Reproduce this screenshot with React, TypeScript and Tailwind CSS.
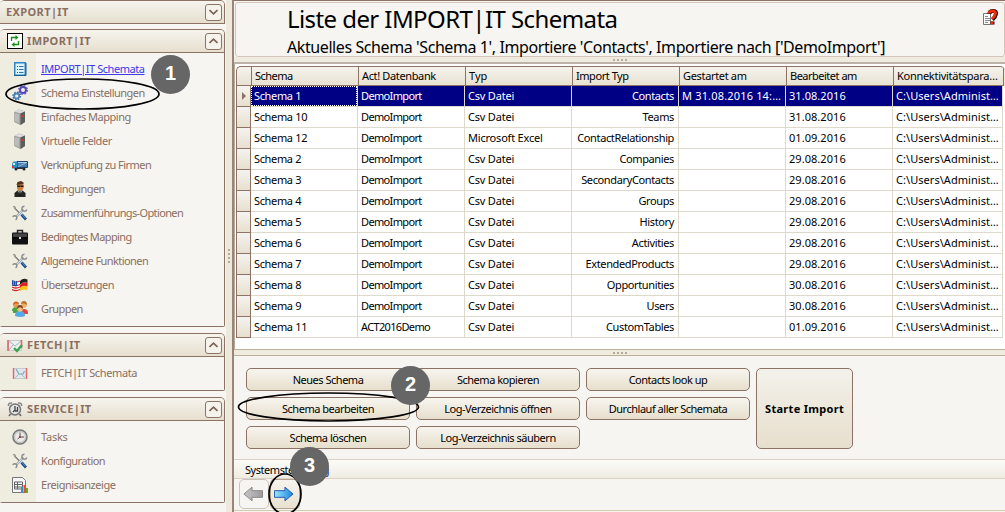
import type { ReactNode } from 'react'

// Small 16x16 drawings used in the navigation
const ICONS: Record<string, ReactNode> = {
  list: (
    <>
      <rect x="2" y="1" width="12" height="14" fill="#2c86c4" />
      <rect x="3.5" y="2.500" width="9" height="11" fill="#dff2ff" />
      <path d="M2 14.500h12V2" stroke="#155e96" fill="none" />
      <path d="M5 5.500h1M5 8.500h1M5 11.500h1" stroke="#155e96" />
      <path d="M7 5.500h4.500M7 8.500h4.500M7 11.500h4.500" stroke="#3277aa" />
    </>
  ),
  gears: (
    <>
      <circle cx="11" cy="5" r="3" fill="none" stroke="#5549b8" strokeWidth="2" />
      <circle cx="11" cy="5" r="4.2" fill="none" stroke="#6256c4" strokeWidth="1.6" strokeDasharray="1.7 1.6" />
      <circle cx="4.7" cy="11" r="2.5" fill="none" stroke="#4c86bb" strokeWidth="1.8" />
      <circle cx="4.7" cy="11" r="3.7" fill="none" stroke="#3972a8" strokeWidth="1.5" strokeDasharray="1.5 1.4" />
    </>
  ),
  server: (
    <>
      <path d="M2.500 3L7 .5l6 2v10.500l-4.500 3-6-3z" fill="#8a8a8a" />
      <path d="M2.500 3L7 .5l6 2-4.500 2z" fill="#dcdcdc" />
      <path d="M2.500 3l6 1.500V16l-6-3z" fill="#a5a5a5" />
      <path d="M4 4.500v8M6 5v8.500" stroke="#d0d0d0" />
      <path d="M8.500 4.500l4.500-2V13l-4.500 3z" fill="#5c5c5c" />
      <rect x="10" y="6.500" width="1.500" height="1.500" fill="#f33" />
    </>
  ),
  truck: (
    <>
      <path d="M5 4.500h10.500v6H5z" fill="#477eae" stroke="#203f63" />
      <path d="M6 5.500h9" stroke="#a9cdec" />
      <path d="M6 9.500L14 6" stroke="#8fb7da" />
      <path d="M0 6.500l1.500-2H5v7H0z" fill="#2592ca" />
      <path d="M1 6h2v2H1z" fill="#dff5ff" />
      <path d="M0 9h2v2H0z" fill="#e72f2f" />
      <circle cx="4" cy="12" r="1.500" fill="#222" />
      <circle cx="12" cy="12" r="1.500" fill="#222" />
      <path d="M4 11.500h8" stroke="#333" />
    </>
  ),
  agent: (
    <>
      <path d="M2.500 16v-4l3-2.500h5l3 2.500v4z" fill="#252525" />
      <path d="M6 9.500h4l-2 5z" fill="#eee" />
      <path d="M7.500 10h1l.5 4-1 1-1-1z" fill="#111" />
      <path d="M5 3h6.500v4l-1.500 3H6.500L5 7.500z" fill="#c98241" />
      <path d="M4.500 4l1-3L9 0l2.500 1.500V3z" fill="#54321d" />
      <path d="M5 4.500h6.500v1.500H9L8.500 5 8 6H5.500z" fill="#111" />
    </>
  ),
  tools: (
    <>
      <path d="M2.500 3l6 6" stroke="#777" strokeWidth="1.300" />
      <path d="M1 1.500l2 .5.500 1.500" stroke="#999" strokeWidth="1.400" fill="none" />
      <path d="M4 12l7.500-7.500" stroke="#8a8f94" strokeWidth="2.300" />
      <path d="M4 12l7.500-7.500" stroke="#d6d9dc" strokeWidth="1.100" />
      <path d="M12.500 1.200a2.500 2.500 0 1 0 2.300 3.300" stroke="#8a8f94" strokeWidth="1.500" fill="none" />
      <path d="M.8 12a2.100 2.100 0 1 1 2.700 2.800" stroke="#8a8f94" strokeWidth="1.500" fill="none" />
      <path d="M9.500 9.500l4.500 5" stroke="#1c4f88" strokeWidth="2.800" />
      <path d="M9.800 9.300l3.700 4" stroke="#6aa3d2" strokeWidth=".8" />
    </>
  ),
  briefcase: (
    <>
      <path d="M5.500 4V1.500h5V4" fill="none" stroke="#222" strokeWidth="1.400" />
      <rect x="0" y="3.500" width="16" height="12" rx="1" fill="#111" />
      <path d="M1 4.500h14v3.500H1z" fill="#444" />
      <path d="M0 9h16" stroke="#000" />
      <rect x="7" y="8" width="2" height="2" fill="#ddd" />
    </>
  ),
  flags: (
    <>
      <path d="M0 3q4 2 8 0v10q-4 2-8 0z" fill="#fff" />
      <path d="M0 4q4 2 8 0M0 7.500q4 2 8 0M0 10q4 2 8 0M0 12.500q4 2 8 0" stroke="#d92626" strokeWidth="1.300" fill="none" />
      <path d="M0 3q3 1.500 5 .8V9q-3 .5-5-.5z" fill="#254ea0" />
      <path d="M1 5h3M1 7h3" stroke="#fff" strokeDasharray="1 1" strokeWidth=".7" />
      <path d="M8 4q3-3.500 7.500-1.500V6Q11 4 8 8z" fill="#222" />
      <path d="M8 8q3-4 7.500-2v3.500Q11 8 8 11z" fill="#df2020" />
      <path d="M8 11q3-3.500 7.500-1.500V13Q11 11.500 8 14z" fill="#f8c316" />
    </>
  ),
  people: (
    <>
      <path d="M0 10q0-4 4-4t4 4z" fill="#46a83e" />
      <path d="M8 12q0-4 4-4t4 4v1H8z" fill="#e5443c" />
      <path d="M1 10h6v2H1z" fill="#46a83e" />
      <circle cx="4" cy="4" r="2.800" fill="#e99b55" />
      <path d="M1 4q0-3.500 3-3.500T7 3L4 2.500z" fill="#d16624" />
      <circle cx="12" cy="4" r="2.800" fill="#e9b06a" />
      <path d="M9 3q0-3 3-3t3 4L12 2.500z" fill="#b8752f" />
      <path d="M3 15q0-5 5-5t5 5q-4 2-10 0z" fill="#55a8e5" />
      <circle cx="8" cy="8" r="2.800" fill="#f3bd82" />
      <path d="M5 8q0-4 3-4t3 4L8 6z" fill="#7d4323" />
    </>
  ),
  mail: (
    <>
      <path d="M1.500 3.500h13v10h-13z" fill="#dfe7ea" stroke="#c3ccd0" />
      <path d="M1.500 3v11M14.500 3v11" stroke="#e8616b" strokeWidth="1.400" />
      <path d="M3 13l4-4M13 13L9 9" stroke="#a9bfc8" fill="none" />
      <path d="M4 4l3 5h4l1.500-3" stroke="#7fa9ba" strokeWidth="1.200" fill="none" />
    </>
  ),
  mailCheck: (
    <>
      <path d="M1.500 3.500h13v10h-13z" fill="#edf0f0" stroke="#c9c9c9" />
      <path d="M1 3v11M14.500 3v8" stroke="#e8616b" strokeWidth="1.600" />
      <path d="M2 4l6 5 6-5M2 13l4-5" stroke="#a5b1b5" fill="none" />
      <path d="M7 11l3 3 5-6" stroke="#3ca554" strokeWidth="2.400" fill="none" />
    </>
  ),
  alarm: (
    <>
      <circle cx="8" cy="8.500" r="5.500" fill="#e4e4e4" stroke="#777" strokeWidth="1.500" />
      <path d="M1.500 5Q1 1.500 5 2M14.500 5q.5-3.500-3.500-3" stroke="#888" strokeWidth="1.600" fill="none" />
      <path d="M8 5v4L6 11M10.500 6v4H8" stroke="#444" strokeWidth="1.300" fill="none" />
      <path d="M3.500 13l-1.500 2M12.500 13l1.500 2" stroke="#666" strokeWidth="1.500" />
    </>
  ),
  clock: (
    <>
      <circle cx="8" cy="8" r="7" fill="#deddda" stroke="#777" strokeWidth="1.500" />
      <circle cx="8" cy="8" r="5.500" fill="#e9e9e7" stroke="#bbb" />
      <path d="M8 3.500V8h4M8 8L5.500 10" stroke="#555" fill="none" />
      <circle cx="8" cy="8" r="1" fill="#a33" />
    </>
  ),
  report: (
    <>
      <path d="M.5.5h10l3 3v12H.5z" fill="#f6f6f6" stroke="#777" />
      <path d="M2.500 5h8v7h-8zM2.500 7.500h8M2.500 10h8M5.500 5v7" stroke="#666" fill="none" />
      <path d="M9 10h2v6H9z" fill="#2f93d3" />
      <path d="M11.500 8h2v8h-2z" fill="#ed4a25" />
      <path d="M14 11h2v5h-2z" fill="#5ab32f" />
    </>
  ),
  refresh: (
    <>
      <rect x=".5" y=".5" width="15" height="15" fill="#fff" stroke="#000" />
      <path d="M4.500 8V4.500H9M11.500 8v3.500H7" stroke="#159015" strokeWidth="1.300" fill="none" />
      <path d="M8.500 2l3 2.500-3 2.500zM7.500 9l-3 2.500 3 2.500z" fill="#159015" />
    </>
  ),
}

// icon, label, letter spacing
const IMPORT_ITEMS = [
  ['list', 'IMPORT|IT Schemata', 'tracking-[-0.45px]'],
  ['gears', 'Schema Einstellungen', 'tracking-[-0.5px]'],
  ['server', 'Einfaches Mapping', 'tracking-[-0.5px]'],
  ['server', 'Virtuelle Felder', 'tracking-[-0.45px]'],
  ['truck', 'Verknüpfung zu Firmen', 'tracking-[-0.54px]'],
  ['agent', 'Bedingungen', 'tracking-[-0.55px]'],
  ['tools', 'Zusammenführungs-Optionen', 'tracking-[-0.63px]'],
  ['briefcase', 'Bedingtes Mapping', 'tracking-[-0.6px]'],
  ['tools', 'Allgemeine Funktionen', 'tracking-[-0.58px]'],
  ['flags', 'Übersetzungen', 'tracking-[-0.5px]'],
  ['people', 'Gruppen', 'tracking-[-0.6px]'],
]

const FETCH_ITEMS = [['mail', 'FETCH|IT Schemata', 'tracking-[-0.38px]']]

const SERVICE_ITEMS = [
  ['clock', 'Tasks', 'tracking-[-0.25px]'],
  ['tools', 'Konfiguration', 'tracking-[-0.55px]'],
  ['report', 'Ereignisanzeige', 'tracking-[-0.45px]'],
]

const COLUMNS = [
  { name: 'Schema', head: 'tracking-[-0.5px]', cell: 'tracking-[-0.35px]' },
  { name: 'Act! Datenbank', head: 'tracking-[-0.36px]', cell: 'tracking-[-0.65px]' },
  { name: 'Typ', head: 'tracking-normal', cell: 'tracking-[-0.2px]' },
  { name: 'Import Typ', head: 'tracking-[-0.45px]', cell: 'tracking-[-0.37px]' },
  { name: 'Gestartet am', head: 'tracking-[-0.33px]', cell: 'tracking-[0.17px]' },
  { name: 'Bearbeitet am', head: 'tracking-[-0.5px]', cell: 'tracking-[0.05px]' },
  { name: 'Konnektivitätspara…', head: 'tracking-[-0.28px]', cell: 'tracking-[0.05px]' },
]

const ROWS = [
  ['Schema 1', 'DemoImport', 'Csv Datei', 'Contacts', 'M 31.08.2016 14:…', '31.08.2016'],
  ['Schema 10', 'DemoImport', 'Csv Datei', 'Teams', '', '31.08.2016'],
  ['Schema 12', 'DemoImport', 'Microsoft Excel', 'ContactRelationship', '', '01.09.2016'],
  ['Schema 2', 'DemoImport', 'Csv Datei', 'Companies', '', '29.08.2016'],
  ['Schema 3', 'DemoImport', 'Csv Datei', 'SecondaryContacts', '', '29.08.2016'],
  ['Schema 4', 'DemoImport', 'Csv Datei', 'Groups', '', '29.08.2016'],
  ['Schema 5', 'DemoImport', 'Csv Datei', 'History', '', '29.08.2016'],
  ['Schema 6', 'DemoImport', 'Csv Datei', 'Activities', '', '29.08.2016'],
  ['Schema 7', 'DemoImport', 'Csv Datei', 'ExtendedProducts', '', '29.08.2016'],
  ['Schema 8', 'DemoImport', 'Csv Datei', 'Opportunities', '', '30.08.2016'],
  ['Schema 9', 'DemoImport', 'Csv Datei', 'Users', '', '30.08.2016'],
  ['Schema 11', 'ACT2016Demo', 'Csv Datei', 'CustomTables', '', '01.09.2016'],
]

const GRID = 'grid grid-cols-[15px_107px_107px_107px_107px_107px_107px_110px]'

function Icon({ name }: { name: string }) {
  return (
    <svg width="16" height="16" viewBox="0 0 16 16" className="shrink-0">
      {ICONS[name]}
    </svg>
  )
}

function PanelHeader({ title, icon, open }: { title: string; icon?: string; open?: boolean }) {
  return (
    <div className="flex h-[22px] items-center rounded-t-[4px] bg-linear-to-b from-[#f6f4ee] to-[#e6dfce] pr-[2px] pl-[6px]">
      {icon && (
        <span className="mr-[4px] ml-[1px]">
          <Icon name={icon} />
        </span>
      )}
      <span className="flex-1 text-[11px] font-bold tracking-[0.38px] whitespace-nowrap">{title}</span>
      <span className="flex size-[17px] items-center justify-center rounded-[3px] border border-[#8c7365] bg-[#f6f3ec]">
        <svg width="9" height="6" viewBox="0 0 9 6" fill="none" stroke="#7b6255" strokeWidth="1.7">
          <path d={open ? 'M.5 5L4.500 1.200 8.500 5' : 'M.5 1L4.500 4.800 8.500 1'} />
        </svg>
      </span>
    </div>
  )
}

function Panel({ title, icon, items, className }: { title: string; icon: string; items: string[][]; className: string }) {
  return (
    <section className={`w-[225px] rounded-t-[5px] rounded-b-[2px] border border-l-0 border-[#8c7365] ${className}`}>
      <PanelHeader title={title} icon={icon} open />
      <ul className="h-[calc(100%-22px)] border-t border-[#8c7365] bg-linear-to-r from-[#efede0] from-[36px] to-[#f6f5f1] to-[36px] pt-[4px]">
        {items.map(([glyph, label, tracking], i) => (
          <li key={i} className="flex h-6 items-center pl-[12px]">
            <Icon name={glyph} />
            <span
              className={`ml-[13px] whitespace-nowrap ${tracking} ${
                glyph === 'list' ? 'text-[#3d38e8] underline' : ''
              }`}
            >
              {label}
            </span>
          </li>
        ))}
      </ul>
    </section>
  )
}

function Dots({ vertical }: { vertical?: boolean }) {
  return (
    <span className={`flex gap-[2px] ${vertical ? 'flex-col' : ''}`}>
      {[0, 1, 2, 3].map(i => (
        <i key={i} className="size-[2px] bg-[#b6aa96]" />
      ))}
    </span>
  )
}

function Button({ label }: { label: string }) {
  return (
    <button className="h-[23px] w-[164px] rounded-[5px] border border-[#8c7365] bg-linear-to-b from-[#f7f5ef] to-[#e7dfcd] pb-px leading-none tracking-[-0.48px] whitespace-nowrap">
      {label}
    </button>
  )
}

function Arrow({ left }: { left?: boolean }) {
  return (
    <svg width="20" height="16" viewBox="0 0 21 16" className={left ? 'rotate-180' : ''}>
      <defs>
        <linearGradient id={left ? 'gray' : 'blue'} x1="0" x2="1">
          <stop offset="0" stopColor={left ? '#9b9b9b' : '#9be6fb'} />
          <stop offset="1" stopColor={left ? '#c6c6c6' : '#1686e0'} />
        </linearGradient>
      </defs>
      <path
        d="M.5 4.500h11V.8l8.500 7.200-8.500 7.200v-3.700H.5z"
        fill={left ? 'url(#gray)' : 'url(#blue)'}
        stroke={left ? '#858585' : '#2058b0'}
      />
    </svg>
  )
}

// Gray numbered marker over the screen
function Marker({ n, className }: { n: number; className: string }) {
  return (
    <span
      className={`absolute flex size-[39px] items-center justify-center rounded-full bg-[#666] pb-[3px] font-['Liberation_Sans',sans-serif] text-[20px] leading-none font-bold text-white ${className}`}
    >
      {n}
    </span>
  )
}

export default function App() {
  return (
    <div className="relative flex h-[512px] w-[1005px] overflow-hidden bg-[#f6f5f1] font-['Noto_Sans',sans-serif] text-[11px] leading-[14px] text-black">
      {/* Navigation */}
      <nav className="w-[226px] shrink-0 text-[#8a6f62]">
        <div className="h-[24px] w-[225px] rounded-t-[5px] border border-l-0 border-[#8c7365]">
          <PanelHeader title="EXPORT|IT" />
        </div>
        <Panel title="IMPORT|IT" icon="refresh" items={IMPORT_ITEMS} className="mt-[5px] h-[298px]" />
        <Panel title="FETCH|IT" icon="mailCheck" items={FETCH_ITEMS} className="mt-[6px] h-[58px]" />
        <Panel title="SERVICE|IT" icon="alarm" items={SERVICE_ITEMS} className="mt-[6px] h-[106px]" />
      </nav>

      <div className="flex w-[8px] shrink-0 items-center justify-center border-r-2 border-[#9c8578] bg-[#ece8dc]">
        <Dots vertical />
      </div>

      <main className="flex w-[771px] flex-col border-t border-[#8c7365]">
        {/* Title */}
        <header className="mt-px ml-px flex h-[55px] justify-between rounded-[3px] border border-[#d4c5b8] pl-[51px]">
          <div className="whitespace-nowrap">
            <h1 className="mt-[3px] text-[24px] leading-[26px] tracking-[-0.58px]">Liste der IMPORT|IT Schemata</h1>
            <p className="mt-[5px] text-[16px] leading-[20px] tracking-[-0.41px]">
              Aktuelles Schema 'Schema 1', Importiere 'Contacts', Importiere nach ['DemoImport']
            </p>
          </div>
          <svg width="16" height="17" viewBox="0 0 16 17" className="mt-[6px] mr-[6px]">
            <path d="M1.500 4.500h7v11h-7z" fill="#fff" stroke="#777" />
            <path d="M3 7.500h3M3 9.500h5M3 11.500h5M3 13.500h3" stroke="#888" />
            <path d="M7.500 5q0-3 3.500-3t3 3-3.500 5.500M10.500 12.500v3" fill="none" stroke="#111" strokeWidth="4" />
            <path d="M7 4.500q0-2.500 3.500-2.500t3 2.700-3.500 5.300M10 12.500v2.800" fill="none" stroke="#f52c08" strokeWidth="2.800" />
          </svg>
        </header>
        <div className="flex h-[7px] items-center justify-center border-b-2 border-[#bcb2a7] bg-[#efebdf]">
          <Dots />
        </div>

        {/* Schema table */}
        <div className="h-[285px] border-l border-[#b7aa9e] bg-white pt-[2px] pl-px">
          <div className={`${GRID} h-[20px] overflow-hidden rounded-t-[5px] border-t border-l border-[#8c7365] bg-linear-to-b from-[#f5f3ee] to-[#e8e1d0]`}>
            <span className="border-r border-b border-[#8c7365]" />
            {COLUMNS.map(({ name, head }) => (
              <span key={name} className={`border-r border-b border-[#8c7365] pt-[2px] pl-[3px] whitespace-nowrap ${head}`}>
                {name}
              </span>
            ))}
          </div>
          {ROWS.map((row, r) => (
            <div key={row[0]} className={`${GRID} h-[21px] ${r === 0 ? 'text-white' : ''}`}>
              <span className="flex items-center justify-center border border-t-0 border-[#8c7365] bg-linear-to-b from-[#f5f3f0] to-[#e7e0cf]">
                {r === 0 && <i className="border-y-4 border-l-4 border-y-transparent border-l-[#8c7365]" />}
              </span>
              {[...row, 'C:\\Users\\Administ…'].map((cell, c) => (
                <span
                  key={c}
                  className={`border-r border-b border-[#dedacb] whitespace-nowrap ${COLUMNS[c].cell} ${
                    c === 3 ? 'text-right' : ''
                  } ${r === 0 ? 'bg-[#000084]' : ''}`}
                >
                  <span
                    className={`block h-[20px] pt-[3px] ${c === 3 ? 'pr-[4px]' : 'pl-[3px]'} ${
                      r === 0 && c === 0 ? 'outline-1 -outline-offset-1 outline-white outline-dotted' : ''
                    }`}
                  >
                    {cell}
                  </span>
                </span>
              ))}
            </div>
          ))}
        </div>
        <div className="flex h-[7px] items-center justify-center border-y border-[#bcb09b] bg-[#efebdf]">
          <Dots />
        </div>

        {/* Actions */}
        <div className="flex h-[103px] gap-[6px] pt-[12px] pl-[12px]">
          <div className="grid h-[81px] grid-cols-3 gap-[6px]">
            <Button label="Neues Schema" />
            <Button label="Schema kopieren" />
            <Button label="Contacts look up" />
            <Button label="Schema bearbeiten" />
            <Button label="Log-Verzeichnis öffnen" />
            <Button label="Durchlauf aller Schemata" />
            <Button label="Schema löschen" />
            <Button label="Log-Verzeichnis säubern" />
          </div>
          <button className="h-[81px] w-[97px] rounded-[5px] border border-[#8c7365] bg-linear-to-b from-[#f3f1eb] to-[#e7dfcd] text-[11px] font-bold tracking-[0.3px] whitespace-nowrap">
            Starte Import
          </button>
        </div>

        {/* System bar */}
        <div className="h-[20px] border-y border-[#ddd1c4] bg-linear-to-b from-[#fbfbf9] to-[#efece2] pt-[3px] pl-[11px] tracking-[-0.45px]">
          Systemsteuerun<span className="text-[#1a1a9a]">g</span>
        </div>
        <div className="flex h-[32px] gap-px border-b border-[#d0cdb0] pl-[5px]">
          <span className="flex size-[30px] items-center justify-center rounded-[5px] border border-[#c9c4bb] pr-[2px]">
            <Arrow left />
          </span>
          <span className="flex size-[30px] items-center justify-center rounded-[4px] border border-[#b5a290] bg-linear-to-b from-[#f7f4ee] to-[#e9e1d1] pr-[3px]">
            <Arrow />
          </span>
        </div>
      </main>

      {/* Step markers */}
      <svg className="absolute inset-0" width="1005" height="512" fill="none" stroke="#000" strokeWidth="1.700">
        <ellipse cx="82.500" cy="94" rx="76.500" ry="15" />
        <ellipse cx="328.500" cy="407" rx="90" ry="14" />
        <ellipse cx="285" cy="494" rx="16" ry="20" />
      </svg>
      <Marker n={1} className="top-[55px] left-[151px]" />
      <Marker n={2} className="top-[366px] left-[391px]" />
      <Marker n={3} className="top-[447px] left-[290px]" />
    </div>
  )
}
